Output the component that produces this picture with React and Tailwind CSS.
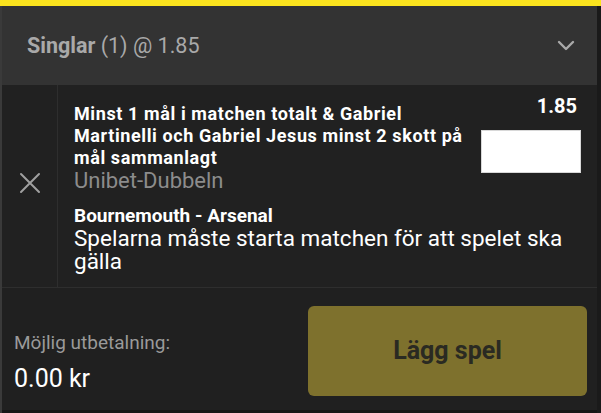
import React from "react";

export default function App() {
  return (
    <div
      className="w-[601px] h-[413px] bg-[#202020] flex flex-col overflow-hidden"
      style={{ fontFamily: "Roboto, 'Liberation Sans', sans-serif" }}
    >
      <div className="h-[6px] bg-[#fbe41e] shrink-0" />
      <div className="flex-1 flex flex-col border-l-[2px] border-l-[#3a3a3a] border-r-[4px] border-r-[#1a1a1a]">
        <div className="h-[79px] shrink-0 bg-[#333333] flex items-center justify-between pl-[25px] pr-[22px]">
          <div className="text-[21.5px] text-[#a9a9a9] leading-none">
            <span className="font-bold">Singlar</span> (1) @ 1.85
          </div>
          <svg width="18" height="11" viewBox="0 0 18 11" fill="none">
            <path d="M2 2l7 7 7-7" stroke="#a9a9a9" strokeWidth="2.4" strokeLinecap="round" strokeLinejoin="round" />
          </svg>
        </div>
        <div className="h-[203px] shrink-0 flex bg-[#212121] border-b border-[#2e2e2e]">
          <div className="w-[56px] shrink-0 border-r border-[#2e2e2e] flex items-center justify-center pb-[6px]">
            <svg width="22" height="22" viewBox="0 0 22 22" fill="none">
              <path d="M2 2l18 18M20 2L2 20" stroke="#a0a0a0" strokeWidth="2" strokeLinecap="round" />
            </svg>
          </div>
          <div className="flex-1 pl-[16px] pr-[16px] flex flex-col">
            <div className="flex justify-between">
              <div className="w-[395px] pt-[18px]">
                <div className="text-[18px] font-bold text-white leading-[22px] tracking-[0.6px] whitespace-nowrap">
                  Minst 1 mål i matchen totalt &amp; Gabriel
                  <br />
                  Martinelli och Gabriel Jesus minst 2 skott på
                  <br />
                  mål sammanlagt
                </div>
                <div className="text-[22px] text-[#8c8c8c] leading-[24px]">Unibet-Dubbeln</div>
              </div>
              <div className="pt-[9px] flex flex-col items-end">
                <div className="text-[20px] font-bold text-white leading-[24px] pr-[4px]">1.85</div>
                <div className="mt-[12px] w-[100px] h-[43px] bg-white border border-[#d8d8d8]" />
              </div>
            </div>
            <div className="mt-[12px] text-[19px] font-bold text-white leading-[22px]">Bournemouth - Arsenal</div>
            <div className="text-[22.5px] text-white leading-[23px]">
              Spelarna måste starta matchen för att spelet ska gälla
            </div>
          </div>
        </div>
        <div className="flex-1 flex items-center justify-between pl-[12px] pr-[10px] border-b-[3px] border-b-[#151515]">
          <div className="flex flex-col pt-[26px]">
            <div className="text-[19px] text-[#9a9a9a] leading-[22px]">Möjlig utbetalning:</div>
            <div className="mt-[12px] text-[25px] text-white leading-[26px]">0.00 kr</div>
          </div>
          <div className="w-[279px] h-[90px] rounded-[6px] bg-[#7e712d] flex items-center justify-center mt-[4px]">
            <span className="text-[25px] font-bold text-[#2a2a22]">Lägg spel</span>
          </div>
        </div>
      </div>
    </div>
  );
}
